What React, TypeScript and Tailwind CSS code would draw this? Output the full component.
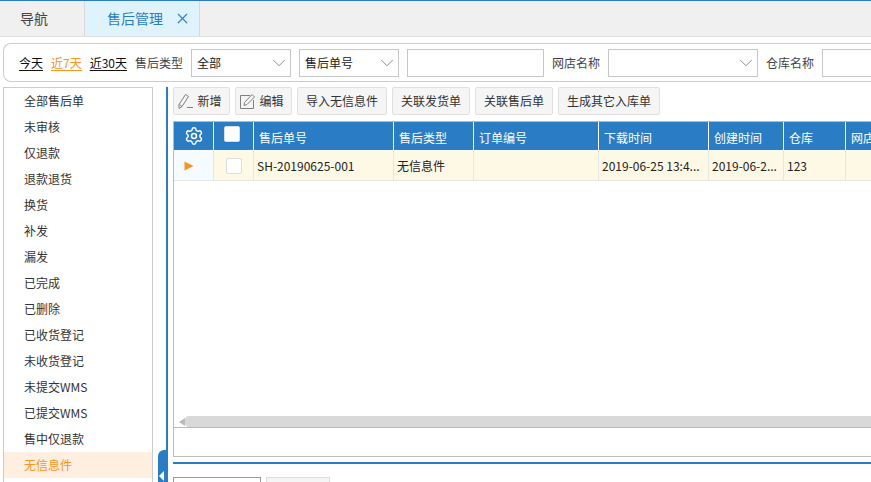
import { Settings, ChevronDown, X } from 'lucide-react';

const sideItems = [
  '全部售后单', '未审核', '仅退款', '退款退货', '换货', '补发', '漏发', '已完成', '已删除',
  '已收货登记', '未收货登记', '未提交WMS', '已提交WMS', '售中仅退款', '无信息件',
];

const columns = [
  { title: '售后单号', width: 'w-[140px]', value: 'SH-20190625-001' },
  { title: '售后类型', width: 'w-[80px]', value: '无信息件' },
  { title: '订单编号', width: 'w-[125px]', value: '' },
  { title: '下载时间', width: 'w-[110px]', value: '2019-06-25 13:4...' },
  { title: '创建时间', width: 'w-[75px]', value: '2019-06-2...' },
  { title: '仓库', width: 'w-[62px]', value: '123' },
  { title: '网店名称', width: 'w-[100px]', value: '' },
];

function Select({ label, width }: { label?: string; width: string }) {
  return (
    <div className={`flex h-7 shrink-0 items-center justify-between border border-[#c8c8c8] pl-[5px] text-[#222] ${width}`}>
      <span>{label}</span>
      <ChevronDown size={22} strokeWidth={0.8} className="text-[#666]" />
    </div>
  );
}

function ToolButton({ children, width, className = '' }: { children: React.ReactNode; width: string; className?: string }) {
  return (
    <div className={`flex h-7 shrink-0 items-center justify-center gap-[3px] whitespace-nowrap rounded-[2px] border border-[#e0e0e0] bg-[#f5f5f5] text-[#333] ${width} ${className}`}>
      {children}
    </div>
  );
}

function AddIcon() {
  return (
    <svg width="17" height="17" viewBox="0 0 17 17" fill="none" stroke="#808080" strokeWidth="1" className="shrink-0">
      <path d="M2 11.5 L8.5 1.5 L11.5 3.5 L5 13.5 L2 15.5 Z" />
      <path d="M2.5 11.5 L5 13.5" />
      <path d="M10 14.5 H16" />
    </svg>
  );
}

function EditIcon() {
  return (
    <svg width="17" height="17" viewBox="0 0 17 17" fill="none" stroke="#808080" strokeWidth="1" className="shrink-0">
      <path d="M11 2.5 H1.5 V15.5 H14.5 V7" />
      <path d="M5.5 9.5 L13 1.5 L15.5 4 L8 11.5 L5 12.5 Z" />
    </svg>
  );
}

export default function App() {
  return (
    <div className="relative h-[482px] w-[871px] overflow-hidden bg-white font-['Noto_Sans_CJK_SC','Liberation_Sans',sans-serif] text-[12px] text-[#333]">
      {/* 顶部标签 */}
      <div className="flex h-[37px] border-t border-b border-t-[#2a7dc4] border-b-[#dddddd] bg-[#f0f0f0] text-[14px]">
        <div className="flex w-[85px] items-center justify-center border-r border-[#d8d8d8] pr-[16px] text-[#444]">导航</div>
        <div className="flex w-[115px] items-center gap-[11px] border-r border-[#d8d8d8] bg-[#dff3fd] pl-[22px] text-[#2a7dc4]">
          <span>售后管理</span>
          <X size={17} strokeWidth={1.75} className="text-[#3f7fd8]" />
        </div>
      </div>

      {/* 筛选 */}
      <div className="ml-[3px] mt-[6px] flex h-[39px] w-[900px] items-center whitespace-nowrap rounded-l-[8px] border border-r-0 border-[#cccccc] pl-[15px]">
        <span className="shrink-0 text-[#111] underline underline-offset-2">今天</span>
        <span className="ml-[8px] shrink-0 text-[#f7941d] underline underline-offset-2">近7天</span>
        <span className="ml-[8px] shrink-0 text-[#111] underline underline-offset-2">近30天</span>
        <span className="ml-[8px] shrink-0 text-[#444]">售后类型</span>
        <div className="ml-[8px]"><Select label="全部" width="w-[100px]" /></div>
        <div className="ml-[8px]"><Select label="售后单号" width="w-[100px]" /></div>
        <div className="ml-[8px] h-7 w-[137px] shrink-0 border border-[#c8c8c8]" />
        <span className="ml-[8px] shrink-0 text-[#444]">网店名称</span>
        <div className="ml-[8px]"><Select width="w-[150px]" /></div>
        <span className="ml-[8px] shrink-0 text-[#444]">仓库名称</span>
        <div className="ml-[8px] h-7 w-[100px] shrink-0 border border-[#c8c8c8]" />
      </div>

      <div className="mt-[5px] flex">
        {/* 左侧分类 */}
        <div className="ml-[3px] h-[400px] w-[150px] shrink-0 border border-[#cccccc] border-b-0 text-[#333]">
          {sideItems.map((item, i) => (
            <div
              key={item}
              className={`flex h-[26px] items-center pl-[20px] ${i === sideItems.length - 1 ? 'bg-[#ffefe0] text-[#f7941d]' : ''}`}
            >
              {item}
            </div>
          ))}
        </div>

        {/* 分隔条 */}
        <div className="ml-[13px] h-[400px] w-[2px] shrink-0 bg-[#2a7dc4]" />

        {/* 右侧 */}
        <div className="ml-[5px] flex w-[700px] shrink-0 flex-col">
          <div className="flex gap-[5px]">
            <ToolButton width="w-[57px]" className="pr-[4px]">
              <AddIcon />
              <span>新增</span>
            </ToolButton>
            <ToolButton width="w-[57px]" className="pr-[4px]">
              <EditIcon />
              <span>编辑</span>
            </ToolButton>
            <ToolButton width="w-[90px]">导入无信息件</ToolButton>
            <ToolButton width="w-[78px]">关联发货单</ToolButton>
            <ToolButton width="w-[78px]">关联售后单</ToolButton>
            <ToolButton width="w-[102px]">生成其它入库单</ToolButton>
          </div>

          <div className="mt-[6px] h-[336px] w-[800px] border border-[#bbbbbb]">
            <div className="flex h-[29px] border-b border-white bg-[#2a7dc4] text-white">
              <div className="flex w-[40px] shrink-0 items-center justify-center border-r border-white">
                <Settings size={20} strokeWidth={1.75} />
              </div>
              <div className="flex w-[40px] shrink-0 justify-center border-r border-white pt-[4px] pr-[4px]">
                <div className="size-4 rounded-[2px] border border-[#dddddd] bg-white" />
              </div>
              {columns.map((col) => (
                <div key={col.title} className={`flex shrink-0 items-center border-r border-white pl-[5px] pt-[3px] ${col.width}`}>
                  {col.title}
                </div>
              ))}
            </div>
            <div className="flex h-[30px] border-b border-[#e6e6e6] bg-[#fef9e5] text-[#222]">
              <div className="flex w-[40px] shrink-0 items-center justify-center border-r border-[#e6e6e6] bg-[#f6fbff]">
                <svg width="10" height="10" viewBox="0 0 10 10" className="mr-[10px]">
                  <path d="M0.5 0.5 L9.5 5 L0.5 9.5 Z" fill="#f7941d" />
                </svg>
              </div>
              <div className="flex w-[40px] shrink-0 items-center justify-center border-r border-[#e6e6e6]">
                <div className="size-4 rounded-[2px] border border-[#dddddd] bg-white" />
              </div>
              {columns.map((col) => (
                <div key={col.title} className={`flex shrink-0 items-center whitespace-nowrap border-r border-[#e6e6e6] pl-[3px] ${col.width}`}>
                  {col.value}
                </div>
              ))}
            </div>
            <div className="mt-[235px] flex h-[12px] items-center border-b border-[#bbbbbb] pl-[5px]">
              <svg width="6" height="8" viewBox="0 0 6 8" className="shrink-0">
                <path d="M6 0 L0 4 L6 8 Z" fill="#bbbbbb" />
              </svg>
              <div className="h-[11px] flex-1 rounded-l-[4px] bg-[#d9d9d9]" />
            </div>
          </div>

          <div className="mt-[5px] h-[2px] w-[800px] bg-[#2a7dc4]" />
          <div className="mt-[13px] flex gap-[5px]">
            <div className="h-[10px] w-[88px] border border-[#999999]" />
            <div className="h-[10px] w-[64px] border border-[#dddddd] bg-[#f5f5f5]" />
          </div>
        </div>
      </div>

      {/* 折叠按钮 */}
      <div className="absolute left-[158px] top-[450px] flex h-[32px] w-[9px] items-end rounded-tl-[6px] bg-[#2a7dc4] pb-[1px]">
        <svg width="5" height="10" viewBox="0 0 5 10" className="ml-[1px]">
          <path d="M5 0 L0 5 L5 10 Z" fill="#ffffff" />
        </svg>
      </div>
    </div>
  );
}
